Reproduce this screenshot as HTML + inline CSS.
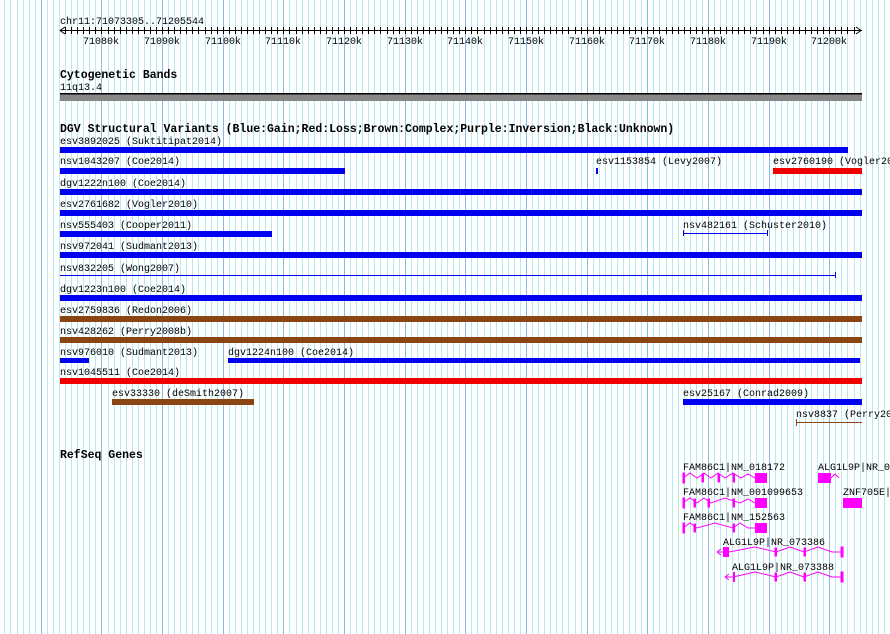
<!DOCTYPE html>
<html><head><meta charset="utf-8"><style>
html,body{margin:0;padding:0;background:#fff;width:890px;height:634px;overflow:hidden}
svg{display:block}
text{font-family:"Liberation Mono",monospace;font-size:10px;fill:#000}
.h{font-weight:bold;font-size:11.5px}
</style></head><body>
<svg width="890" height="634" viewBox="0 0 890 634" xmlns="http://www.w3.org/2000/svg">
<path stroke="#b4eaf0" stroke-width="1" shape-rendering="crispEdges" d="M4.5 0V634M10.5 0V634M17.5 0V634M23.5 0V634M29.5 0V634M35.5 0V634M47.5 0V634M53.5 0V634M59.5 0V634M65.5 0V634M71.5 0V634M77.5 0V634M83.5 0V634M89.5 0V634M95.5 0V634M108.5 0V634M114.5 0V634M120.5 0V634M126.5 0V634M132.5 0V634M138.5 0V634M144.5 0V634M150.5 0V634M156.5 0V634M168.5 0V634M174.5 0V634M180.5 0V634M186.5 0V634M192.5 0V634M198.5 0V634M205.5 0V634M211.5 0V634M217.5 0V634M229.5 0V634M235.5 0V634M241.5 0V634M247.5 0V634M253.5 0V634M259.5 0V634M265.5 0V634M271.5 0V634M277.5 0V634M289.5 0V634M296.5 0V634M302.5 0V634M308.5 0V634M314.5 0V634M320.5 0V634M326.5 0V634M332.5 0V634M338.5 0V634M350.5 0V634M356.5 0V634M362.5 0V634M368.5 0V634M374.5 0V634M380.5 0V634M387.5 0V634M393.5 0V634M399.5 0V634M411.5 0V634M417.5 0V634M423.5 0V634M429.5 0V634M435.5 0V634M441.5 0V634M447.5 0V634M453.5 0V634M459.5 0V634M471.5 0V634M477.5 0V634M484.5 0V634M490.5 0V634M496.5 0V634M502.5 0V634M508.5 0V634M514.5 0V634M520.5 0V634M532.5 0V634M538.5 0V634M544.5 0V634M550.5 0V634M556.5 0V634M562.5 0V634M568.5 0V634M575.5 0V634M581.5 0V634M593.5 0V634M599.5 0V634M605.5 0V634M611.5 0V634M617.5 0V634M623.5 0V634M629.5 0V634M635.5 0V634M641.5 0V634M653.5 0V634M659.5 0V634M666.5 0V634M672.5 0V634M678.5 0V634M684.5 0V634M690.5 0V634M696.5 0V634M702.5 0V634M714.5 0V634M720.5 0V634M726.5 0V634M732.5 0V634M738.5 0V634M744.5 0V634M750.5 0V634M756.5 0V634M763.5 0V634M775.5 0V634M781.5 0V634M787.5 0V634M793.5 0V634M799.5 0V634M805.5 0V634M811.5 0V634M817.5 0V634M823.5 0V634M835.5 0V634M841.5 0V634M847.5 0V634M854.5 0V634M860.5 0V634M866.5 0V634M872.5 0V634M878.5 0V634M884.5 0V634"/>
<path stroke="#86bce6" stroke-width="1" shape-rendering="crispEdges" d="M41.5 0V634M101.5 0V634M162.5 0V634M223.5 0V634M283.5 0V634M344.5 0V634M405.5 0V634M465.5 0V634M526.5 0V634M587.5 0V634M647.5 0V634M708.5 0V634M769.5 0V634M829.5 0V634"/>
<!-- axis -->
<text x="60" y="24">chr11:71073305..71205544</text>
<rect x="60" y="30" width="802" height="1" fill="#000"/>
<path stroke="#000" shape-rendering="crispEdges" d="M65.5 27v7M71.5 27v7M77.5 27v7M83.5 27v7M89.5 27v7M95.5 27v7M101.5 27v7M108.5 27v7M114.5 27v7M120.5 27v7M126.5 27v7M132.5 27v7M138.5 27v7M144.5 27v7M150.5 27v7M156.5 27v7M162.5 27v7M168.5 27v7M174.5 27v7M180.5 27v7M186.5 27v7M192.5 27v7M198.5 27v7M205.5 27v7M211.5 27v7M217.5 27v7M223.5 27v7M229.5 27v7M235.5 27v7M241.5 27v7M247.5 27v7M253.5 27v7M259.5 27v7M265.5 27v7M271.5 27v7M277.5 27v7M283.5 27v7M289.5 27v7M296.5 27v7M302.5 27v7M308.5 27v7M314.5 27v7M320.5 27v7M326.5 27v7M332.5 27v7M338.5 27v7M344.5 27v7M350.5 27v7M356.5 27v7M362.5 27v7M368.5 27v7M374.5 27v7M380.5 27v7M387.5 27v7M393.5 27v7M399.5 27v7M405.5 27v7M411.5 27v7M417.5 27v7M423.5 27v7M429.5 27v7M435.5 27v7M441.5 27v7M447.5 27v7M453.5 27v7M459.5 27v7M465.5 27v7M471.5 27v7M477.5 27v7M484.5 27v7M490.5 27v7M496.5 27v7M502.5 27v7M508.5 27v7M514.5 27v7M520.5 27v7M526.5 27v7M532.5 27v7M538.5 27v7M544.5 27v7M550.5 27v7M556.5 27v7M562.5 27v7M568.5 27v7M575.5 27v7M581.5 27v7M587.5 27v7M593.5 27v7M599.5 27v7M605.5 27v7M611.5 27v7M617.5 27v7M623.5 27v7M629.5 27v7M635.5 27v7M641.5 27v7M647.5 27v7M653.5 27v7M659.5 27v7M666.5 27v7M672.5 27v7M678.5 27v7M684.5 27v7M690.5 27v7M696.5 27v7M702.5 27v7M708.5 27v7M714.5 27v7M720.5 27v7M726.5 27v7M732.5 27v7M738.5 27v7M744.5 27v7M750.5 27v7M756.5 27v7M763.5 27v7M769.5 27v7M775.5 27v7M781.5 27v7M787.5 27v7M793.5 27v7M799.5 27v7M805.5 27v7M811.5 27v7M817.5 27v7M823.5 27v7M829.5 27v7M835.5 27v7M841.5 27v7M847.5 27v7M854.5 27v7"/>
<path d="M60 30.5 L65 27 M60 30.5 L65 34 M861 30.5 L856 27 M861 30.5 L856 34" stroke="#000" fill="none"/>
<g text-anchor="middle">
<text x="101" y="44">71080k</text><text x="162" y="44">71090k</text><text x="223" y="44">71100k</text><text x="283" y="44">71110k</text><text x="344" y="44">71120k</text><text x="405" y="44">71130k</text><text x="465" y="44">71140k</text><text x="526" y="44">71150k</text><text x="587" y="44">71160k</text><text x="647" y="44">71170k</text><text x="708" y="44">71180k</text><text x="769" y="44">71190k</text><text x="829" y="44">71200k</text>
</g>
<text class="h" x="60" y="78">Cytogenetic Bands</text>
<text x="60" y="90">11q13.4</text>
<rect x="60" y="93" width="802" height="1.5" fill="#000"/>
<rect x="60" y="94.5" width="802" height="6.5" fill="#888"/>
<text class="h" x="60" y="132">DGV Structural Variants (Blue:Gain;Red:Loss;Brown:Complex;Purple:Inversion;Black:Unknown)</text>
<text x="60" y="144">esv3892025 (Suktitipat2014)</text>
<rect x="60" y="147" width="788" height="6" fill="#0000ee"/>
<text x="60" y="164">nsv1043207 (Coe2014)</text>
<rect x="60" y="168" width="285" height="6" fill="#0000ee"/>
<text x="596" y="164">esv1153854 (Levy2007)</text>
<rect x="596" y="168" width="2" height="6" fill="#0000ee"/>
<text x="773" y="164">esv2760190 (Vogler2010)</text>
<rect x="773" y="168" width="89" height="6" fill="#ee0000"/>
<text x="60" y="186">dgv1222n100 (Coe2014)</text>
<rect x="60" y="189" width="802" height="6" fill="#0000ee"/>
<text x="60" y="207">esv2761682 (Vogler2010)</text>
<rect x="60" y="210" width="802" height="6" fill="#0000ee"/>
<text x="60" y="228">nsv555403 (Cooper2011)</text>
<rect x="60" y="231" width="212" height="6" fill="#0000ee"/>
<text x="683" y="228">nsv482161 (Schuster2010)</text>
<path d="M683.5 230 v6 M767.5 230 v6 M683 233.5 H768" stroke="#0000ee" fill="none"/>
<text x="60" y="249">nsv972041 (Sudmant2013)</text>
<rect x="60" y="252" width="802" height="6" fill="#0000ee"/>
<text x="60" y="271">nsv832205 (Wong2007)</text>
<path d="M60 275.5 H836 M835.5 272 v6" stroke="#0000ee" fill="none"/>
<text x="60" y="292">dgv1223n100 (Coe2014)</text>
<rect x="60" y="295" width="802" height="6" fill="#0000ee"/>
<text x="60" y="313">esv2759836 (Redon2006)</text>
<rect x="60" y="316" width="802" height="6" fill="#8b4513"/>
<text x="60" y="334">nsv428262 (Perry2008b)</text>
<rect x="60" y="337" width="802" height="6" fill="#8b4513"/>
<text x="60" y="355">nsv976010 (Sudmant2013)</text>
<rect x="60" y="358" width="29" height="5" fill="#0000ee"/>
<text x="228" y="355">dgv1224n100 (Coe2014)</text>
<rect x="228" y="358" width="632" height="5" fill="#0000ee"/>
<text x="60" y="375">nsv1045511 (Coe2014)</text>
<rect x="60" y="378" width="802" height="6" fill="#ee0000"/>
<text x="112" y="396">esv33330 (deSmith2007)</text>
<rect x="112" y="399" width="142" height="6" fill="#8b4513"/>
<text x="683" y="396">esv25167 (Conrad2009)</text>
<rect x="683" y="399" width="179" height="6" fill="#0000ee"/>
<text x="796" y="417">nsv8837 (Perry2008b)</text>
<path d="M796 422.5 H862 M796.5 419 v7" stroke="#8b4513" fill="none"/>
<text class="h" x="60" y="458">RefSeq Genes</text>
<g fill="#ff00ff" stroke="#ff00ff">
<text x="683" y="470" style="fill:#000;stroke:none">FAM86C1|NM_018172</text>
<polyline fill="none" points="683,478 690,473 697,478 704,473 711,478 718,473 725,478 733,473 741,478 748,474 755,478"/>
<rect x="683" y="473" width="1.5" height="10"/><rect x="702" y="474" width="1.5" height="8"/><rect x="718" y="474" width="1.5" height="8"/><rect x="733" y="474" width="1.5" height="8"/>
<rect x="755" y="473" width="12" height="10" stroke="none"/>
<text x="818" y="470" style="fill:#000;stroke:none">ALG1L9P|NR_073386</text>
<rect x="818" y="473" width="13" height="10" stroke="none"/>
<polyline fill="none" points="831,478 835,474 839,478"/>
<text x="683" y="495" style="fill:#000;stroke:none">FAM86C1|NM_001099653</text>
<polyline fill="none" points="683,503 690,498 697,503 704,498 711,503 725,498 740,503 748,499 755,503"/>
<rect x="683" y="498" width="1.5" height="10"/><rect x="694" y="499" width="1.5" height="8"/><rect x="708" y="499" width="1.5" height="8"/><rect x="733" y="499" width="1.5" height="8"/>
<rect x="755" y="498" width="12" height="10" stroke="none"/>
<text x="843" y="495" style="fill:#000;stroke:none">ZNF705E|NM_001</text>
<rect x="843" y="498" width="19" height="10" stroke="none"/>
<text x="683" y="520" style="fill:#000;stroke:none">FAM86C1|NM_152563</text>
<polyline fill="none" points="683,528 690,523 697,528 715,523 733,528 740,523 748,528 755,528"/>
<rect x="683" y="523" width="1.5" height="10"/><rect x="694" y="524" width="1.5" height="8"/><rect x="733" y="524" width="1.5" height="8"/>
<rect x="755" y="523" width="12" height="10" stroke="none"/>
<text x="723" y="545" style="fill:#000;stroke:none">ALG1L9P|NR_073386</text>
<polyline fill="none" points="729,552 755,547 776,552 790,547 804,552 818,547 832,552 841,552"/>
<path d="M717 552 H729 M717 552 l4 -3 M717 552 l4 3" fill="none"/>
<rect x="723" y="547" width="6" height="10" stroke="none"/><rect x="775" y="548" width="1.5" height="8"/><rect x="804" y="548" width="1.5" height="8"/><rect x="841" y="547" width="2" height="10"/>
<text x="732" y="570" style="fill:#000;stroke:none">ALG1L9P|NR_073388</text>
<polyline fill="none" points="733,577 755,572 776,577 790,572 804,577 818,572 832,577 841,577"/>
<path d="M725 577 H733 M725 577 l4 -3 M725 577 l4 3" fill="none"/>
<rect x="733" y="572" width="2" height="10" stroke="none"/><rect x="775" y="573" width="1.5" height="8"/><rect x="804" y="573" width="1.5" height="8"/><rect x="841" y="572" width="2" height="10"/>
</g>
</svg>
</body></html>
